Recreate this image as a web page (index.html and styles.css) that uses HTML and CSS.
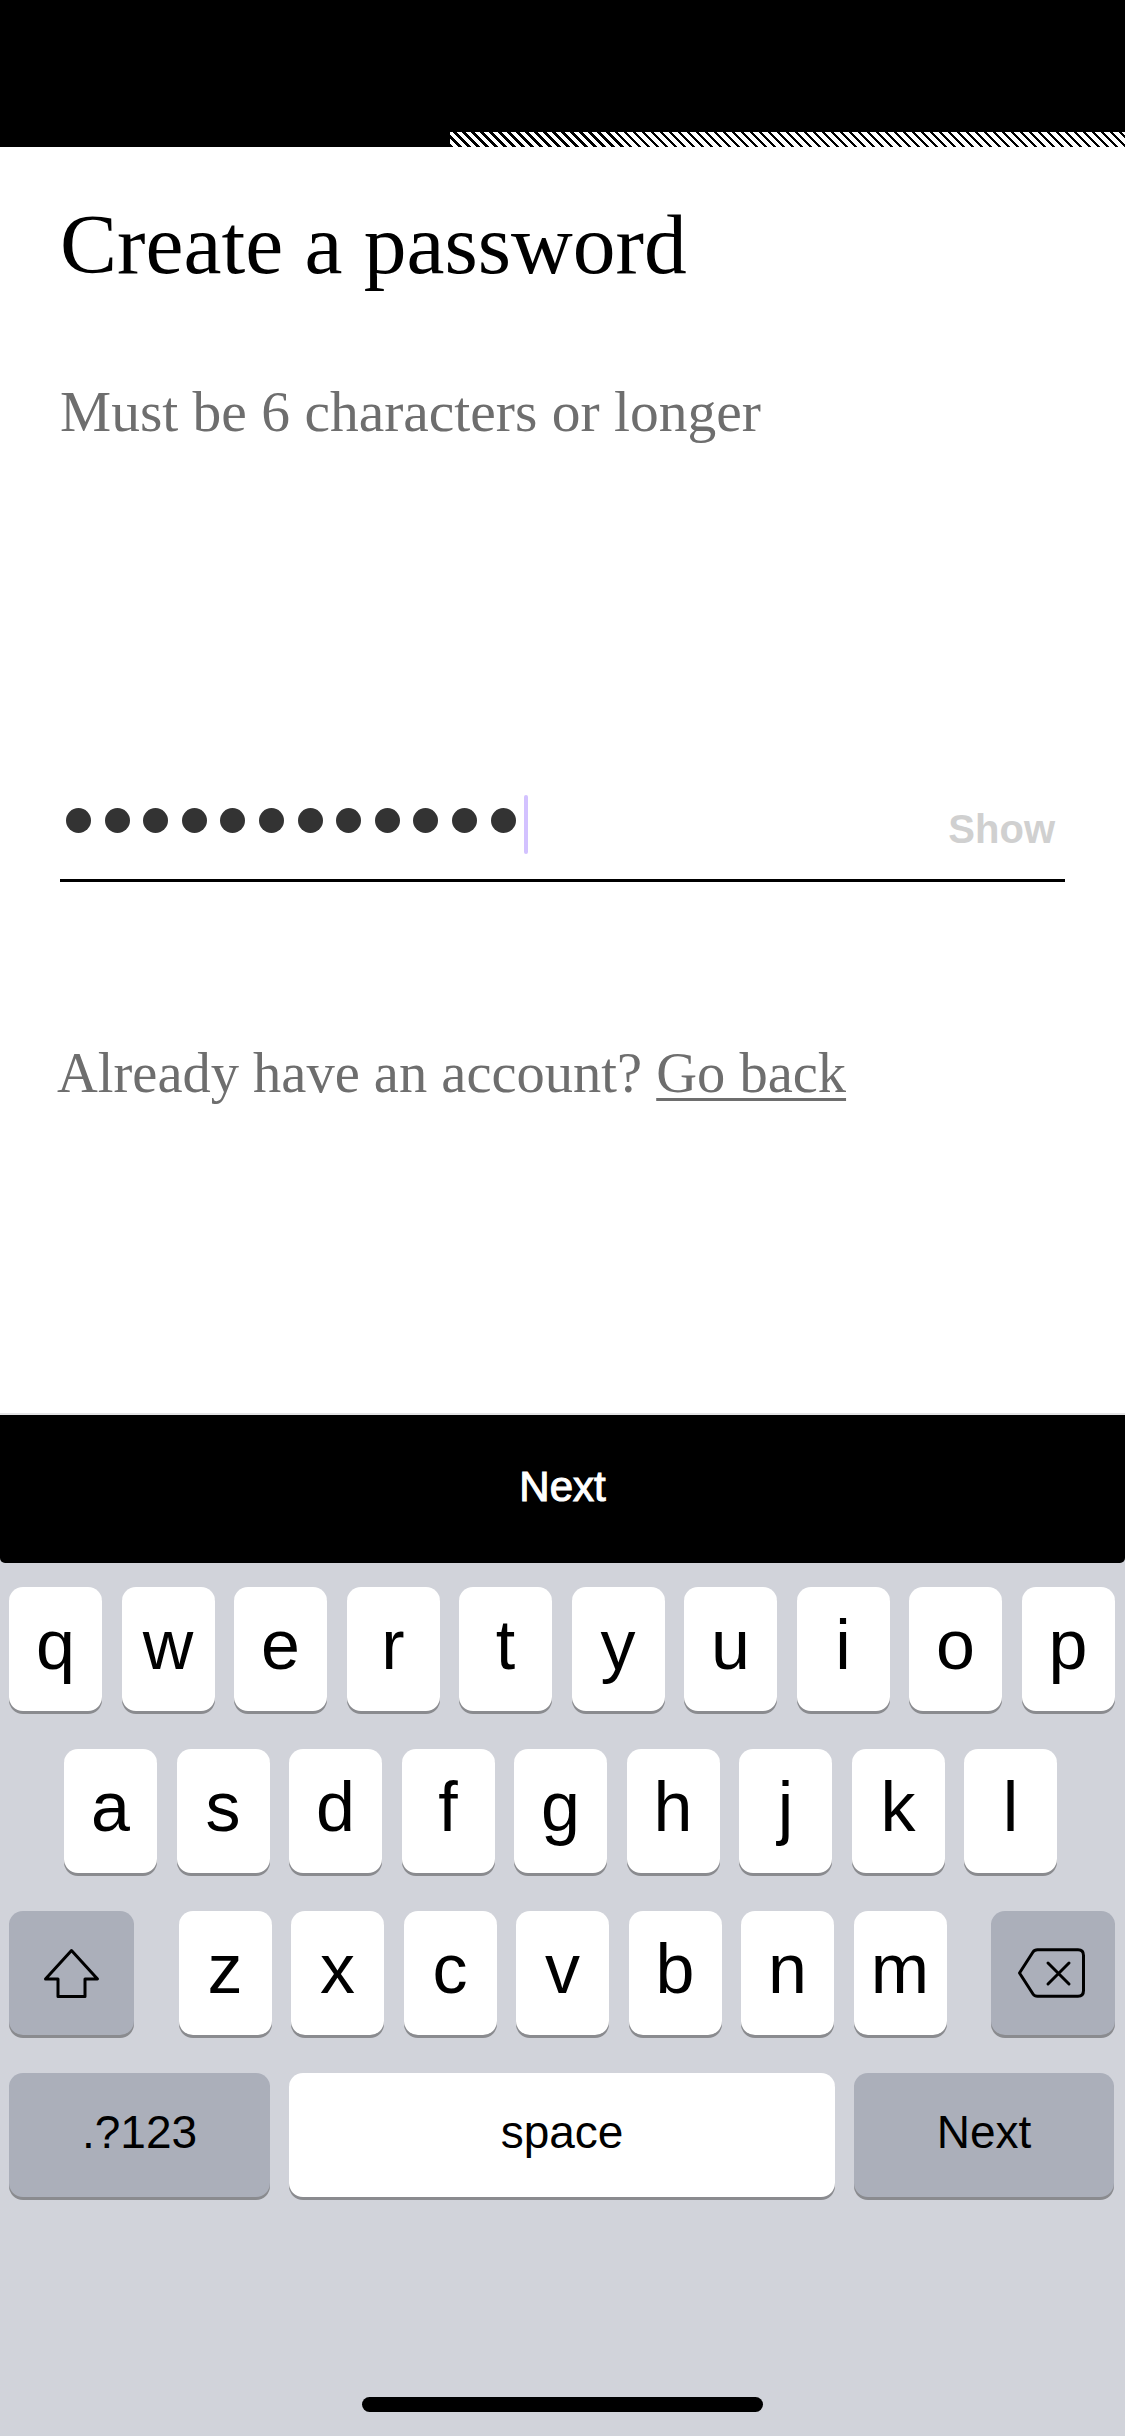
FILE: index.html
```html
<!DOCTYPE html>
<html lang="en">
<head>
<meta charset="utf-8">
<title>Create a password</title>
<link rel="stylesheet" href="styles.css">
</head>
<body>
<div class="screen">
  <div class="status"></div>
  <div class="progress">
    <div class="progress-fill"></div>
    <div class="progress-rest"></div>
  </div>
  <main class="content">
    <h1 class="title">Create a password</h1>
    <p class="hint">Must be 6 characters or longer</p>
    <div class="field">
      <div class="dots" aria-label="password, 12 characters">
        <span class="dot"></span><span class="dot"></span><span class="dot"></span><span class="dot"></span>
        <span class="dot"></span><span class="dot"></span><span class="dot"></span><span class="dot"></span>
        <span class="dot"></span><span class="dot"></span><span class="dot"></span><span class="dot"></span>
      </div>
      <span class="caret"></span>
      <span class="show">Show</span>
    </div>
    <p class="login">Already have an account? <a class="link" href="#">Go back</a></p>
  </main>
  <div class="cta">
    <button class="next-btn" type="button">Next</button>
  </div>
  <div class="keyboard">
    <div class="row row-top">
      <span class="key">q</span><span class="key">w</span><span class="key">e</span><span class="key">r</span><span class="key">t</span><span class="key">y</span><span class="key">u</span><span class="key">i</span><span class="key">o</span><span class="key">p</span>
    </div>
    <div class="row row-mid">
      <span class="key">a</span><span class="key">s</span><span class="key">d</span><span class="key">f</span><span class="key">g</span><span class="key">h</span><span class="key">j</span><span class="key">k</span><span class="key">l</span>
    </div>
    <div class="row row-low">
      <span class="key key-fn key-shift">
        <svg width="57" height="51" viewBox="0 0 57 51" aria-hidden="true">
          <path d="M28.5 2.5 L54.5 31 L42 31 L42 48.5 L15 48.5 L15 31 L2.5 31 Z" fill="none" stroke="#000" stroke-width="3" stroke-linejoin="round"/>
        </svg>
      </span>
      <div class="letters">
        <span class="key">z</span><span class="key">x</span><span class="key">c</span><span class="key">v</span><span class="key">b</span><span class="key">n</span><span class="key">m</span>
      </div>
      <span class="key key-fn key-del">
        <svg width="69" height="50" viewBox="0 0 69 50" aria-hidden="true">
          <path d="M2.5 25 L16 4 Q17.5 1.8 20.5 1.8 H61 Q66.5 1.8 66.5 7.5 V42.5 Q66.5 48.2 61 48.2 H20.5 Q17.5 48.2 16 46 Z" fill="none" stroke="#000" stroke-width="3" stroke-linejoin="round"/>
          <path d="M31 15 L52 36 M52 15 L31 36" stroke="#000" stroke-width="3" stroke-linecap="round"/>
        </svg>
      </span>
    </div>
    <div class="row row-bottom">
      <span class="key key-fn key-num">.?123</span>
      <span class="key key-space">space</span>
      <span class="key key-fn key-go">Next</span>
    </div>
    <div class="home-indicator"></div>
  </div>
</div>
</body>
</html>
```

FILE: styles.css
```css
* {
  box-sizing: border-box;
}

html,
body {
  margin: 0;
  padding: 0;
  background: #ffffff;
}

.screen {
  width: 1125px;
  height: 2436px;
  display: flex;
  flex-direction: column;
  overflow: hidden;
  background: #ffffff;
}

.status {
  height: 132px;
  background: #000000;
  flex: none;
}

.progress {
  height: 15px;
  display: flex;
  flex: none;
}

.progress-fill {
  width: 450px;
  background: #000000;
}

.progress-rest {
  flex: 1;
  background: repeating-linear-gradient(45deg, #000000 0 2.2px, #ffffff 2.2px 6.36px);
}

.content {
  flex: 1;
  padding: 0 60px;
  display: flex;
  flex-direction: column;
}

.title {
  margin: 55px 0 0;
  font-family: "Liberation Serif", "Times New Roman", serif;
  font-weight: 400;
  font-size: 85.5px;
  line-height: 85px;
  color: #000000;
}

.hint {
  margin: 96px 0 0;
  font-family: "Liberation Serif", "Times New Roman", serif;
  font-size: 57.5px;
  line-height: 57px;
  color: #6e6e6e;
}

.field {
  margin-top: 355px;
  height: 87px;
  display: flex;
  align-items: flex-start;
  border-bottom: 3px solid #000000;
  padding-left: 6px;
}

.dots {
  display: flex;
  gap: 13.6px;
  margin-top: 13px;
}

.dot {
  width: 25px;
  height: 25px;
  border-radius: 50%;
  background: #333333;
}

.caret {
  width: 4px;
  height: 59px;
  margin-left: 8px;
  border-radius: 2px;
  background: #d3c2ff;
}

.show {
  margin-left: auto;
  margin-right: 10px;
  margin-top: 14px;
  font-family: "Liberation Sans", Arial, sans-serif;
  font-weight: 700;
  font-size: 40px;
  line-height: 40px;
  color: #d0d0d0;
}

.login {
  margin: 163px 0 0 -3px;
  font-family: "Liberation Serif", "Times New Roman", serif;
  font-size: 56.5px;
  line-height: 57px;
  color: #6e6e6e;
}

.link {
  color: #6e6e6e;
  text-decoration: underline;
  text-decoration-thickness: 3px;
  text-underline-offset: 6px;
}

.cta {
  flex: none;
  border-top: 2px solid #e4e4e6;
  background: #d1d3da;
}

.next-btn {
  display: flex;
  align-items: center;
  justify-content: center;
  width: 100%;
  height: 148px;
  margin: 0;
  padding: 0 0 4px;
  border: 0;
  border-radius: 0 0 5px 5px;
  background: #000000;
  color: #ffffff;
  font-family: "Liberation Sans", Arial, sans-serif;
  font-size: 42px;
  line-height: 42px;
  -webkit-text-stroke: 1.1px #ffffff;
}

.keyboard {
  flex: none;
  height: 873px;
  background: #d1d3da;
  padding-top: 24px;
  display: flex;
  flex-direction: column;
  gap: 38px;
}

.row {
  display: flex;
  height: 124px;
}

.row-top {
  padding: 0 10px 0 9px;
  gap: 19.5px;
}

.row-mid {
  padding-left: 64px;
  gap: 19.5px;
}

.row-low {
  padding: 0 10px 0 9px;
  justify-content: space-between;
}

.letters {
  display: flex;
  gap: 19.5px;
}

.row-bottom {
  padding: 0 11px 0 9px;
  gap: 19px;
}

.key {
  width: 93px;
  height: 124px;
  display: flex;
  align-items: center;
  justify-content: center;
  padding-bottom: 8px;
  border-radius: 14px;
  background: #ffffff;
  box-shadow: 0 3px 0 #8a8b8f;
  font-family: "Liberation Sans", Arial, sans-serif;
  font-size: 70px;
  line-height: 70px;
  color: #000000;
}

.key-fn {
  background: #abafba;
}

.key-shift {
  width: 125px;
  padding-bottom: 0;
}

.key-del {
  width: 124px;
  padding: 0 4px 0 0;
}

.key-num,
.key-space,
.key-go {
  font-size: 46px;
  line-height: 46px;
  padding-bottom: 6px;
}

.key-num {
  width: 261px;
}

.key-space {
  width: 546px;
}

.key-go {
  width: 260px;
}

.home-indicator {
  margin: auto auto 24px;
  width: 401px;
  height: 15px;
  border-radius: 8px;
  background: #000000;
}
```
